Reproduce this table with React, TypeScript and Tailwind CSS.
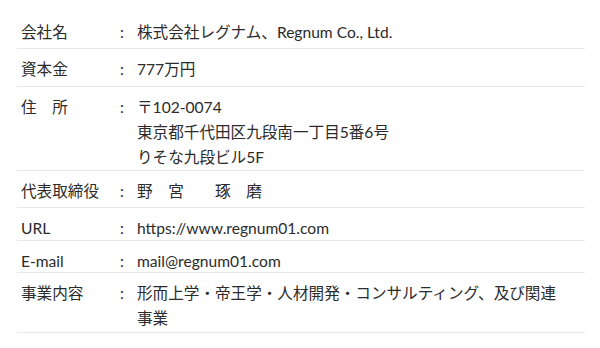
import React from "react";

const rows: { label: string; value: React.ReactNode; h: string }[] = [
  { label: "会社名", value: "株式会社レグナム、Regnum Co., Ltd.", h: "h-[37px]" },
  { label: "資本金", value: "777万円", h: "h-[38px]" },
  {
    label: "住　所",
    value: (
      <>
        〒102-0074
        <br />
        東京都千代田区九段南一丁目5番6号
        <br />
        りそな九段ビル5F
      </>
    ),
    h: "h-[84px]",
  },
  { label: "代表取締役", value: <span className="whitespace-pre">野　宮　　琢　磨</span>, h: "h-[37px]" },
  { label: "URL", value: "https://www.regnum01.com", h: "h-[33px]" },
  { label: "E-mail", value: "mail@regnum01.com", h: "h-[32px]" },
  { label: "事業内容", value: "形而上学・帝王学・人材開発・コンサルティング、及び関連事業", h: "h-[60px]" },
];

export default function App() {
  return (
    <div
      className="w-[600px] h-[348px] bg-white pt-[12px] pl-[17px] pr-[15px] text-[15.6px] text-[#2b2b2b]"
      style={{ fontFamily: 'Lato, "Noto Sans CJK JP", sans-serif' }}
    >
      {rows.map((r, i) => (
        <div
          key={i}
          className={`flex items-start overflow-hidden border-b border-[#e8e8e8] px-[4px] pt-[8px] leading-[25px] ${r.h}`}
        >
          <div className="w-[99px] shrink-0">{r.label}</div>
          <div className="w-[17px] shrink-0">:</div>
          <div className="w-[430px] shrink-0">{r.value}</div>
        </div>
      ))}
    </div>
  );
}
